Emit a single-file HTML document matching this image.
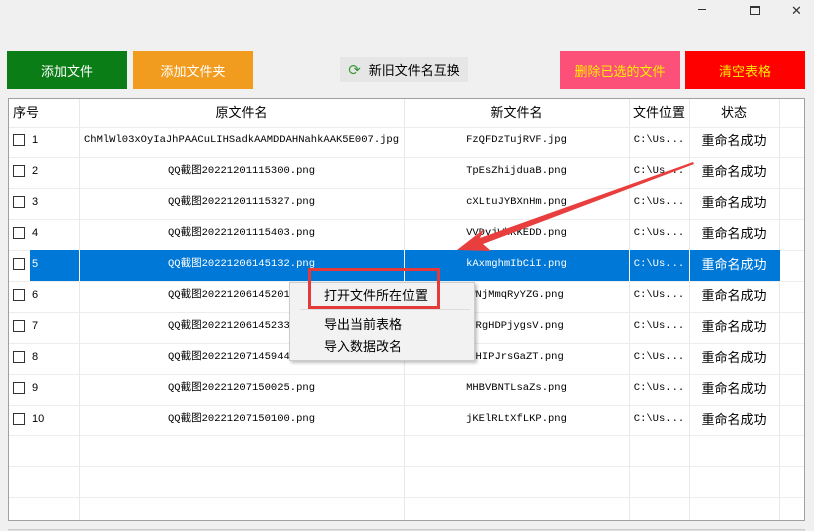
<!DOCTYPE html>
<html><head><meta charset="utf-8"><style>
*{margin:0;padding:0;box-sizing:border-box}
body{width:814px;height:531px;background:#f0f0f0;position:relative;overflow:hidden;font-family:"Liberation Sans","Noto Sans CJK SC",sans-serif;font-size:13px;color:#000}
.a{position:absolute}
.btn{position:absolute;display:flex;align-items:center;justify-content:center;font-size:13px}
.tbl{position:absolute;left:8px;top:98px;width:797px;height:423px;background:#fff;border:1px solid #a0a0a0;overflow:hidden}
.vl{position:absolute;top:0;bottom:0;width:1px;background:#e8e8e8}
.hl{position:absolute;left:0;right:0;height:1px;background:#ececec}
.row{position:absolute;left:0;width:797px;height:31px;font-size:10.5px;font-family:"Liberation Mono","Noto Sans CJK SC",monospace}
.c{position:absolute;top:0;height:31px;line-height:29px;text-align:center;white-space:nowrap;overflow:hidden}
.cb{position:absolute;left:4px;top:8px;width:12px;height:12px;border:1px solid #333;background:#fff}
.num{position:absolute;left:23px;top:0;line-height:29px;font-size:11px;font-family:"Liberation Sans",sans-serif}
.st{font-family:"Liberation Sans","Noto Sans CJK SC",sans-serif;font-size:13px}
.hd{position:absolute;top:0;height:28px;line-height:28px;text-align:center;font-size:13px}
</style></head><body>
<div class="a" style="left:698px;top:9px;width:8px;height:1px;background:#333"></div>
<div class="a" style="left:750px;top:6px;width:10px;height:9px;border:1px solid #333;border-top-width:2px"></div>
<div class="a" style="left:791px;top:3px;font-size:13px;color:#333">✕</div>

<div class="btn" style="left:7px;top:51px;width:120px;height:38px;background:#0b7d16;color:#fff">添加文件</div>
<div class="btn" style="left:133px;top:51px;width:120px;height:38px;background:#f29c1f;color:#fff">添加文件夹</div>
<div class="btn" style="left:340px;top:57px;width:128px;height:25px;background:#e6e6e6;color:#000"><span style="color:#3a9a3a;font-size:15px;margin-right:8px">⟳</span>新旧文件名互换</div>
<div class="btn" style="left:560px;top:51px;width:120px;height:38px;background:#fd5078;color:#ffec00">删除已选的文件</div>
<div class="btn" style="left:685px;top:51px;width:120px;height:38px;background:#fe0000;color:#ffec00">清空表格</div>

<div class="tbl">
<div class="vl" style="left:70px"></div>
<div class="vl" style="left:395px"></div>
<div class="vl" style="left:620px"></div>
<div class="vl" style="left:680px"></div>
<div class="vl" style="left:770px"></div>
<div class="hd" style="left:4px;text-align:left">序号</div>
<div class="hd" style="left:70px;width:325px">原文件名</div>
<div class="hd" style="left:395px;width:225px">新文件名</div>
<div class="hd" style="left:620px;width:60px">文件位置</div>
<div class="hd" style="left:680px;width:90px">状态</div>
<div class="hl" style="top:28px"></div>

<div class="row" style="top:27px"><div class="cb"></div><div class="num">1</div><div class="c" style="left:70px;width:325px">ChMlWl03xOyIaJhPAACuLIHSadkAAMDDAHNahkAAK5E007.jpg</div><div class="c" style="left:395px;width:225px">FzQFDzTujRVF.jpg</div><div class="c" style="left:620px;width:60px">C:\Us...</div><div class="c st" style="left:680px;width:90px">重命名成功</div></div>
<div class="hl" style="top:58px"></div>
<div class="row" style="top:58px"><div class="cb"></div><div class="num">2</div><div class="c" style="left:70px;width:325px">QQ截图20221201115300.png</div><div class="c" style="left:395px;width:225px">TpEsZhijduaB.png</div><div class="c" style="left:620px;width:60px">C:\Us...</div><div class="c st" style="left:680px;width:90px">重命名成功</div></div>
<div class="hl" style="top:89px"></div>
<div class="row" style="top:89px"><div class="cb"></div><div class="num">3</div><div class="c" style="left:70px;width:325px">QQ截图20221201115327.png</div><div class="c" style="left:395px;width:225px">cXLtuJYBXnHm.png</div><div class="c" style="left:620px;width:60px">C:\Us...</div><div class="c st" style="left:680px;width:90px">重命名成功</div></div>
<div class="hl" style="top:120px"></div>
<div class="row" style="top:120px"><div class="cb"></div><div class="num">4</div><div class="c" style="left:70px;width:325px">QQ截图20221201115403.png</div><div class="c" style="left:395px;width:225px">VVDvjWhRKEDD.png</div><div class="c" style="left:620px;width:60px">C:\Us...</div><div class="c st" style="left:680px;width:90px">重命名成功</div></div>
<div class="hl" style="top:151px"></div>
<div class="row" style="top:151px"><div class="cb"></div><div class="a" style="left:21px;top:0;width:750px;height:31px;background:#0078d7"></div><div class="num" style="color:#fff">5</div><div class="vl" style="left:70px;background:#fff;height:31px"></div><div class="c" style="left:70px;width:325px;color:#fff">QQ截图20221206145132.png</div><div class="vl" style="left:395px;background:#fff;height:31px"></div><div class="c" style="left:395px;width:225px;color:#fff">kAxmghmIbCiI.png</div><div class="vl" style="left:620px;background:#fff;height:31px"></div><div class="c" style="left:620px;width:60px;color:#fff">C:\Us...</div><div class="vl" style="left:680px;background:#fff;height:31px"></div><div class="c st" style="left:680px;width:90px;color:#fff">重命名成功</div></div>
<div class="hl" style="top:182px"></div>
<div class="row" style="top:182px"><div class="cb"></div><div class="num">6</div><div class="c" style="left:70px;width:325px">QQ截图20221206145201.png</div><div class="c" style="left:395px;width:225px">WNjMmqRyYZG.png</div><div class="c" style="left:620px;width:60px">C:\Us...</div><div class="c st" style="left:680px;width:90px">重命名成功</div></div>
<div class="hl" style="top:213px"></div>
<div class="row" style="top:213px"><div class="cb"></div><div class="num">7</div><div class="c" style="left:70px;width:325px">QQ截图20221206145233.png</div><div class="c" style="left:395px;width:225px">vRgHDPjygsV.png</div><div class="c" style="left:620px;width:60px">C:\Us...</div><div class="c st" style="left:680px;width:90px">重命名成功</div></div>
<div class="hl" style="top:244px"></div>
<div class="row" style="top:244px"><div class="cb"></div><div class="num">8</div><div class="c" style="left:70px;width:325px">QQ截图20221207145944.png</div><div class="c" style="left:395px;width:225px">PHIPJrsGaZT.png</div><div class="c" style="left:620px;width:60px">C:\Us...</div><div class="c st" style="left:680px;width:90px">重命名成功</div></div>
<div class="hl" style="top:275px"></div>
<div class="row" style="top:275px"><div class="cb"></div><div class="num">9</div><div class="c" style="left:70px;width:325px">QQ截图20221207150025.png</div><div class="c" style="left:395px;width:225px">MHBVBNTLsaZs.png</div><div class="c" style="left:620px;width:60px">C:\Us...</div><div class="c st" style="left:680px;width:90px">重命名成功</div></div>
<div class="hl" style="top:306px"></div>
<div class="row" style="top:306px"><div class="cb"></div><div class="num">10</div><div class="c" style="left:70px;width:325px">QQ截图20221207150100.png</div><div class="c" style="left:395px;width:225px">jKElRLtXfLKP.png</div><div class="c" style="left:620px;width:60px">C:\Us...</div><div class="c st" style="left:680px;width:90px">重命名成功</div></div>
<div class="hl" style="top:336px"></div>
<div class="hl" style="top:367px"></div>
<div class="hl" style="top:398px"></div>
</div>
<div class="a" style="left:8px;top:529px;width:797px;height:2px;background:#e0e0e0;border-top:1px solid #ccc"></div>

<div class="a" style="left:289px;top:282px;width:186px;height:79px;background:#f2f2f2;border:1px solid #ccc;box-shadow:2px 2px 3px rgba(0,0,0,0.25)"></div>
<div class="a" style="left:324px;top:285px;font-size:13px">打开文件所在位置</div>
<div class="a" style="left:300px;top:309px;width:170px;height:1px;background:#ddd"></div>
<div class="a" style="left:324px;top:314px;font-size:13px">导出当前表格</div>
<div class="a" style="left:324px;top:336px;font-size:13px">导入数据改名</div>
<div class="a" style="left:308px;top:268px;width:132px;height:41px;border:3px solid #e53a3a"></div>

<svg class="a" style="left:0;top:0" width="814" height="531">
<polygon points="693,162 480,238 484,229 457,250 491,251 483,244 694,164" fill="#e83e3e"/>
</svg>
</body></html>
